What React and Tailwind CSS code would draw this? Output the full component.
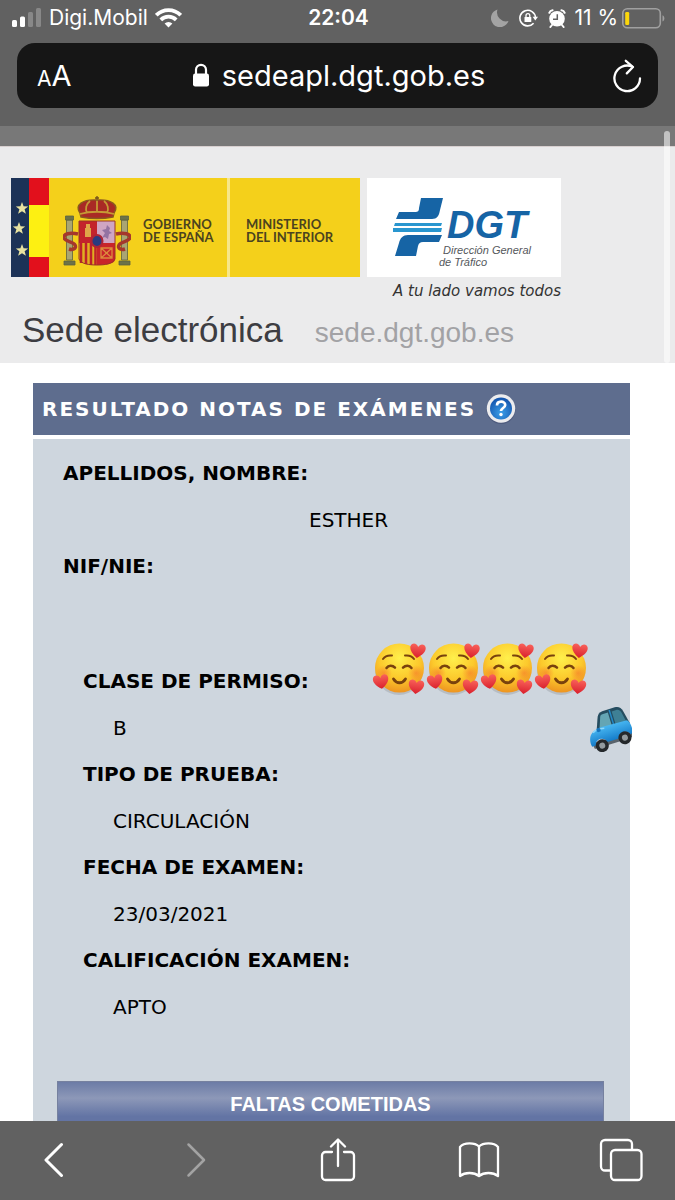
import { useId } from 'react'

const resultados = [
    { label: 'CLASE DE PERMISO:', value: 'B' },
    { label: 'TIPO DE PRUEBA:', value: 'CIRCULACIÓN' },
    { label: 'FECHA DE EXAMEN:', value: '23/03/2021' },
    { label: 'CALIFICACIÓN EXAMEN:', value: 'APTO' },
]

function Signal() {
    return (
        <svg width="30" height="20" viewBox="0 0 30 20" fill="#fff">
            <rect x="0" y="12" width="5" height="7" rx="1.5" />
            <rect x="8" y="8.500" width="5" height="10.500" rx="1.500" />
            <rect x="16" y="4" width="5" height="15" rx="1.500" opacity=".25" />
            <rect x="24" y="0" width="5" height="19" rx="1.500" opacity=".25" />
        </svg>
    )
}

function Wifi() {
    return (
        <svg width="27" height="20" viewBox="0 0 27 20" fill="none" stroke="#fff" strokeWidth="3.800">
            <path d="M1.300 7.200a17.200 17.200 0 0 1 24.400 0" />
            <path d="M5.800 11.800a10.900 10.900 0 0 1 15.400 0" />
            <path d="M13.500 19.600l-3.900-4a5.600 5.600 0 0 1 7.800 0z" fill="#fff" stroke="none" />
        </svg>
    )
}

function Moon() {
    return (
        <svg width="18" height="18" viewBox="0 0 18 18" fill="#a3a3a3">
            <path d="M6.500.500A9 9 0 0 0 17.500 12 9 9 0 1 1 6.500.500z" />
        </svg>
    )
}

function RotationLock() {
    return (
        <svg width="19" height="18" viewBox="0 0 19 18" fill="none" stroke="#fff" strokeWidth="1.600">
            <path d="M14.600 14.200A7.800 7.800 0 1 1 16.500 8.500" />
            <path d="M13.600 7.800h5.400l-2.700 3.800z" fill="#fff" stroke="none" />
            <rect x="5.500" y="8" width="6.800" height="5" rx=".6" fill="#fff" stroke="none" />
            <path d="M7 8.200V6.600a1.900 1.900 0 0 1 3.800 0v1.600" strokeWidth="1.300" />
        </svg>
    )
}

function Alarm() {
    return (
        <svg width="18" height="19" viewBox="0 0 18 19">
            <circle cx="9" cy="9.800" r="7.800" fill="#fff" />
            <g stroke="#fff" strokeWidth="2" strokeLinecap="round" fill="none">
                <path d="M1.300 3.800C1.800 2.400 3 1.400 4.600 1.200M16.700 3.800C16.200 2.400 15 1.400 13.400 1.200" />
                <path d="M4 16l-1.600 2M14 16l1.600 2" />
            </g>
            <path d="M9.300 5.200v5H5" fill="none" stroke="#616161" strokeWidth="1.500" />
        </svg>
    )
}

function Battery() {
    return (
        <svg width="43" height="21" viewBox="0 0 43 21">
            <rect x=".8" y=".8" width="37.500" height="19" rx="4.500" fill="none" stroke="#a0a0a0" strokeWidth="1.600" />
            <rect x="3.200" y="4" width="4" height="13" rx="1.300" fill="#fbd60b" />
            <path d="M40.500 7.200c2.500 1 2.500 5.200 0 6.200z" fill="#a0a0a0" />
        </svg>
    )
}

function Padlock() {
    return (
        <svg width="18" height="25" viewBox="0 0 18 25">
            <rect x="1" y="10.500" width="16" height="13" rx="2.200" fill="#fff" />
            <path d="M4 11V6.800a5 5 0 0 1 10 0V11" fill="none" stroke="#fff" strokeWidth="2.200" />
        </svg>
    )
}

function Reload() {
    return (
        <svg width="30" height="34" viewBox="0 0 30 34" fill="none" stroke="#fff" strokeWidth="2.300" strokeLinecap="round" strokeLinejoin="round">
            <path d="M28 19.500A12.800 12.800 0 1 1 20.500 7.700" />
            <path d="M13.800 1.800L21 8l-6.200 6.400" />
        </svg>
    )
}

function EuropeSpainFlag() {
    return (
        <svg className="shrink-0" width="38" height="99" viewBox="0 0 38 99">
            <rect width="18" height="99" fill="#1c3257" />
            <rect x="18" width="20" height="27" fill="#e2101c" />
            <rect x="18" y="27" width="20" height="52" fill="#fdf012" />
            <rect x="18" y="79" width="20" height="20" fill="#e2101c" />
            <g fill="#e8e2a0">
                <path id="star" d="M11 24l1.600 4.300 4.600.2-3.600 2.800 1.300 4.500-3.900-2.600-3.900 2.600 1.300-4.500-3.600-2.800 4.600-.2z" />
                <use href="#star" x="-3" y="20" />
                <use href="#star" y="42" />
            </g>
        </svg>
    )
}

function CoatOfArms() {
    return (
        <svg className="shrink-0" width="68" height="70" viewBox="0 0 68 70">
            {/* pillars */}
            <g fill="#a9a573" stroke="#5d6240" strokeWidth=".8">
                <path d="M3.500 24h6v40h-6zM58.500 24h6v40h-6z" />
                <path d="M2.500 20h8v4h-8zM57.500 20h8v4h-8zM1 65h11v4H1zM56 65h11v4H56z" fill="#6d7348" />
            </g>
            <g fill="none" stroke="#a5372c" strokeWidth="3.500">
                <path d="M15 38C7 36 0 38 1 42s9 3 11 7-3 5-6 4" />
                <path d="M53 38c8-2 15 0 14 4s-9 3-11 7 3 5 6 4" />
            </g>
            {/* crown */}
            <path d="M17 17c-6-8 3-14 17-13 14-1 23 5 17 13l-1 4c-10 2-22 2-32 0z" fill="#a92a25" stroke="#8a5a1f" strokeWidth="1.500" />
            <path d="M17 18c10-3 24-3 34 0M34 3v13M27 5c-4 3-5 8-3 12M41 5c4 3 5 8 3 12" fill="none" stroke="#c59a35" strokeWidth="1.800" />
            <path d="M34 0v5M32 2h4" stroke="#76511c" strokeWidth="1.300" />
            {/* shield */}
            <path d="M16 25h18v22H16z" fill="#c3232c" />
            <path d="M34 25h18v22H34z" fill="#cfa5c4" />
            <path d="M16 47h18v22c-9 0-17-1-18-5z" fill="#e0ae21" />
            <path d="M18 47v20M23 47v21M28 47v22M32.500 47v22" stroke="#bd222a" strokeWidth="2.500" />
            <path d="M34 47h18v17c-1 4-9 5-18 5z" fill="#c8252a" />
            <path d="M22 41v-9h1v-4h4v4h1v9z" fill="#dfa548" />
            <path d="M39 42l3-5-3-3 4-1 1-4 3 3-1 3 3 2-3 1-1 5-3-2z" fill="#9473a2" />
            <path d="M38 52h11v10H38zM38 52l11 10M49 52L38 62" fill="none" stroke="#dc8b3d" strokeWidth="1.300" />
            <path d="M16 25h36v38c-2 5-10 6-18 6s-16-1-18-6z" fill="none" stroke="#9a3528" />
            <ellipse cx="34" cy="45" rx="5.500" ry="6" fill="#293b80" stroke="#ae2536" strokeWidth="2" />
        </svg>
    )
}

function DgtSymbol() {
    return (
        <svg className="shrink-0" width="52" height="58" viewBox="0 0 52 58" fill="#1664a5">
            <path d="M28 0h22l-3 12c-1 6-3 9-8 9H3l3-7h16c3 0 4-1 4-4z" />
            <path d="M2 25h47l-1 3H1zM0 30h49l-1 4H0z" fill="#2996cf" />
            <path d="M15 37h34l-3 7H30c-3 0-4 1-5 4l-2 10H2l4-13c1-5 4-8 9-8z" />
        </svg>
    )
}

function HelpIcon() {
    return (
        <svg width="30" height="30" viewBox="0 0 30 30">
            <defs>
                <radialGradient id="help" cx="50%" cy="70%" r="65%">
                    <stop offset="0" stopColor="#3b9fe8" />
                    <stop offset="1" stopColor="#1557b0" />
                </radialGradient>
            </defs>
            <circle cx="15" cy="15.500" r="14.500" fill="#3f4c70" opacity=".5" />
            <circle cx="15" cy="14.500" r="14.200" fill="#ececee" />
            <circle cx="15" cy="14.500" r="11" fill="url(#help)" />
            <path d="M11 11.500c0-5 8.200-5 8.200-.5 0 3-4.200 3-4.200 6" fill="none" stroke="#fff" strokeWidth="2.700" />
            <circle cx="15" cy="20.500" r="1.700" fill="#fff" />
        </svg>
    )
}

function HeartsFace() {
    const id = useId()
    const heart = 'M0 14C-6 10-8.500 6-7.500 2.500-6.500-1-1.500-1 0 3 1.500-1 6.500-1 7.500 2.500 8.500 6 6 10 0 14z'
    return (
        <svg width="54" height="54" viewBox="0 0 54 54">
            <defs>
                <radialGradient id={id + 'f'} cx="50%" cy="30%" r="70%">
                    <stop offset="0" stopColor="#fff04c" />
                    <stop offset=".6" stopColor="#fcc92c" />
                    <stop offset="1" stopColor="#ee9420" />
                </radialGradient>
                <radialGradient id={id + 'c'}>
                    <stop offset="0" stopColor="#f4662d" stopOpacity=".5" />
                    <stop offset="1" stopColor="#f4662d" stopOpacity="0" />
                </radialGradient>
                <linearGradient id={id + 'h'} x1="0" y1="0" x2="0" y2="1">
                    <stop offset="0" stopColor="#f9625a" />
                    <stop offset="1" stopColor="#d9202d" />
                </linearGradient>
            </defs>
            <ellipse cx="27" cy="28" rx="24" ry="25" fill="#8c8f91" opacity=".35" />
            <circle cx="27.500" cy="26" r="24.500" fill={`url(#${id}f)`} />
            <circle cx="12" cy="31" r="8" fill={`url(#${id}c)`} />
            <circle cx="44" cy="31" r="8" fill={`url(#${id}c)`} />
            <g fill="none" stroke="#79420d" strokeWidth="2" strokeLinecap="round">
                <path d="M11 17c2-3 5-4 9-3.500M33 13.500c4-.5 7 .5 9 3.500" />
                <path d="M14.500 26c2-3 6-3 8.500-.3M31 25.700c2.500-2.700 6.500-2.700 8.500.3" strokeWidth="2.500" />
                <path d="M21.500 37c3 5 9 5 12 0" strokeWidth="2.800" />
            </g>
            <g fill={`url(#${id}h)`}>
                <path d={heart} transform="translate(46.500 2) rotate(7)" />
                <path d={heart} transform="translate(8 33) rotate(-8)" />
                <path d={heart} transform="translate(45 38) rotate(7)" />
            </g>
        </svg>
    )
}

function Car() {
    return (
        <svg width="46" height="46" viewBox="0 0 46 46">
            <defs>
                <linearGradient id="body" x1="0" y1="0" x2="0" y2="1">
                    <stop offset="0" stopColor="#48b7f2" />
                    <stop offset="1" stopColor="#157cc9" />
                </linearGradient>
            </defs>
            <g transform="rotate(-17 23 24)">
                <path d="M4 38h36c4 0 5-3 4-6H3z" fill="#5a646c" />
                <path d="M11 21l5-13c1-2 3-4 6-4h13c4 0 6 2 7 6l3 14z" fill="#254d60" />
                <path d="M14 21l4-11c1-3 2-3 4-3h5v14z" fill="#64a5b4" />
                <path d="M31 7h4c3 0 4 1 5 4l2 10H31z" fill="#3e8095" />
                <path d="M29 5v17" stroke="#2288c5" strokeWidth="1.500" />
                <path d="M2 35c-1-5 0-10 4-13 3-2 7-3 11-3l26 1c3 3 3 9 2 14h-3c-1-5-11-5-12 1H18c-1-6-11-7-12 0z" fill="url(#body)" />
                <path d="M7 22c3-2 8-2 12-1" stroke="#8fd9fb" strokeWidth="1.500" fill="none" />
                <circle cx="12" cy="37" r="6.500" fill="#24282b" />
                <circle cx="12" cy="37" r="3" fill="#929a9e" />
                <circle cx="36" cy="36" r="6.500" fill="#24282b" />
                <circle cx="36" cy="36" r="3" fill="#929a9e" />
                <rect x="11" y="19" width="4" height="4" rx="1.500" fill="#1573bd" />
            </g>
        </svg>
    )
}

function StatusBar() {
    return (
        <div className="flex items-center h-9 pl-3 pr-2.5 text-[21px] leading-6">
            <div className="flex flex-1 items-center gap-[7px]">
                <Signal />
                <span>Digi.Mobil</span>
                <Wifi />
            </div>
            <span className="font-semibold">22:04</span>
            <div className="flex flex-1 items-center justify-end">
                <Moon />
                <span className="ml-2.5"><RotationLock /></span>
                <span className="ml-2.5"><Alarm /></span>
                <span className="ml-2 mr-1">11 %</span>
                <Battery />
            </div>
        </div>
    )
}

function AddressBar() {
    return (
        <div className="flex items-center justify-between h-[65px] mx-[17px] mt-[7px] mb-[18px] pl-5 pr-4 rounded-[18px] bg-[#161616]">
            <button className="flex items-baseline w-9 pt-1" aria-label="Ajustes de texto">
                <span className="text-[21px] leading-8">A</span>
                <span className="text-[29px] leading-8">A</span>
            </button>
            <div className="flex items-center gap-3 pr-2">
                <Padlock />
                <span className="text-[29px] leading-8">sedeapl.dgt.gob.es</span>
            </div>
            <button aria-label="Recargar"><Reload /></button>
        </div>
    )
}

function Banner() {
    return (
        <div className="bg-[#ebebec] border-t border-[#d8d0d0] pt-[31px] pb-2 font-['Liberation_Sans',Arial,sans-serif]">
            <div className="flex items-start ml-[11px]">
                <div className="flex h-[99px] bg-[#f4d01b] text-[#4b431f] text-[13px] leading-[13px] font-bold font-['Lato',sans-serif]">
                    <EuropeSpainFlag />
                    <div className="flex items-center w-[181px] pl-[14px] pt-1.5 gap-3 border-r-3 border-[#f7e78a]">
                        <CoatOfArms />
                        <span>GOBIERNO<br />DE ESPAÑA</span>
                    </div>
                    <div className="flex items-center w-[130px] pl-4 pt-1.5">
                        <span>MINISTERIO<br />DEL INTERIOR</span>
                    </div>
                </div>
                <div className="ml-[7px]">
                    <div className="flex items-start w-[194px] h-[99px] pl-[26px] pt-5 bg-white">
                        <DgtSymbol />
                        <div className="pt-2">
                            <div className="pl-0.5 text-[#1664a5] text-[38px] leading-[38px] font-bold italic">DGT</div>
                            <div className="-ml-1.5 text-[#55585c] text-[11px] leading-3 italic whitespace-nowrap">
                                <div className="pl-1">Dirección General</div>
                                <div>de Tráfico</div>
                            </div>
                        </div>
                    </div>
                    <div className="pl-[26px] pt-1 text-[#333] text-[15px] leading-5 italic whitespace-nowrap font-['DejaVu_Sans',sans-serif]">A tu lado vamos todos</div>
                </div>
            </div>
            <div className="flex items-baseline gap-8 ml-[22px] mt-1 h-[50px] leading-[50px]">
                <span className="text-[#3d3d42] text-[35px]">Sede electrónica</span>
                <span className="text-[#a2a2a5] text-[28px]">sede.dgt.gob.es</span>
            </div>
        </div>
    )
}

function Campo({ label, value, indent }) {
    return (
        <>
            <dt className="h-6 mb-[23px] font-bold">{label}</dt>
            <dd className={'h-6 mb-[22px] ' + (indent || 'pl-[30px]')}>{value}</dd>
        </>
    )
}

function Toolbar() {
    const boton = 'flex items-center justify-center w-11 h-12'
    return (
        <nav className="flex shrink-0 justify-between px-8 pt-[15px] h-[79px] bg-[#616161]">
            <button className={boton} aria-label="Atrás">
                <svg width="20" height="36" viewBox="0 0 20 36" fill="none" stroke="#fff" strokeWidth="3" strokeLinecap="round" strokeLinejoin="round">
                    <path d="M17.500 2.500L2 18l15.500 15.500" />
                </svg>
            </button>
            <button className={boton} aria-label="Adelante">
                <svg width="20" height="36" viewBox="0 0 20 36" fill="none" stroke="#a3a3a3" strokeWidth="2.500" strokeLinecap="round" strokeLinejoin="round">
                    <path d="M2.500 2.500L18 18 2.500 33.500" />
                </svg>
            </button>
            <button className={boton} aria-label="Compartir">
                <svg width="36" height="44" viewBox="0 0 36 44" fill="none" stroke="#fff" strokeWidth="2.300" strokeLinecap="round" strokeLinejoin="round">
                    <path d="M12 14H5.500A3.500 3.500 0 0 0 2 17.500v21A3.500 3.500 0 0 0 5.500 42h25a3.500 3.500 0 0 0 3.500-3.500v-21a3.500 3.500 0 0 0-3.500-3.500H24" />
                    <path d="M18 28V2M11 8.500L18 1.500l7 7" />
                </svg>
            </button>
            <button className={boton} aria-label="Marcadores">
                <svg width="42" height="38" viewBox="0 0 42 38" fill="none" stroke="#fff" strokeWidth="2.300" strokeLinejoin="round">
                    <path d="M21 5.500C17 1.500 6 1 2 6v29c5-4 14-4 19 0 5-4 14-4 19 0V6C36 1 25 1.500 21 5.500zM21 5.500V35" />
                </svg>
            </button>
            <button className={boton} aria-label="Pestañas">
                <svg width="44" height="44" viewBox="0 0 44 44" fill="none" stroke="#fff" strokeWidth="2.300">
                    <path d="M12 32.500H6A4 4 0 0 1 2 28.500V6a4 4 0 0 1 4-4h23a4 4 0 0 1 4 4v6" />
                    <rect x="12" y="12" width="30.500" height="30" rx="4" />
                </svg>
            </button>
        </nav>
    )
}

export default function App() {
    return (
        <div className="flex flex-col h-screen overflow-hidden bg-white font-['Inter',sans-serif]">
            <header className="shrink-0 bg-[#616161] text-white">
                <StatusBar />
                <AddressBar />
            </header>
            <main className="relative flex-1 min-h-0 overflow-hidden">
                <div className="h-5 bg-[#787878]"></div>
                <Banner />
                <div className="absolute right-[5px] top-[5px] w-[6px] h-[232px] rounded-full bg-white/55"></div>

                <div className="mt-5 ml-[33px] mr-[45px] text-black text-xl leading-6 font-['DejaVu_Sans',Verdana,sans-serif]">
                    <div className="flex items-center gap-2.5 h-[52px] pl-[9px] bg-[#5e6d8e] text-white">
                        <h1 className="font-bold tracking-widest">RESULTADO NOTAS DE EXÁMENES</h1>
                        <button aria-label="Ayuda"><HelpIcon /></button>
                    </div>
                    <div className="relative mt-1 pt-[22px] bg-[#ced6de]">
                        <dl className="pl-[30px]">
                            <Campo label="APELLIDOS, NOMBRE:" value="ESTHER" indent="pl-[246px]" />
                            <Campo label="NIF/NIE:" value="" />
                        </dl>
                        <dl className="pl-[50px] pt-[22px]">
                            {resultados.map((r) => (
                                <Campo key={r.label} label={r.label} value={r.value} />
                            ))}
                        </dl>
                        <div className="absolute flex right-[42px] top-[203px]">
                            <HeartsFace />
                            <HeartsFace />
                            <HeartsFace />
                            <HeartsFace />
                        </div>
                        <div className="absolute -right-0.5 top-[267px]">
                            <Car />
                        </div>
                        <div className="pl-6 pr-[26px] pt-10 pb-8">
                            <h2 className="h-12 border border-[#76819f] bg-linear-to-b from-[#6c7ca6] via-[#8d98b8] via-35% to-[#6374a4] to-75% text-center text-white font-bold leading-[44px] font-['Liberation_Sans',Arial,sans-serif]">FALTAS COMETIDAS</h2>
                        </div>
                    </div>
                </div>
            </main>
            <Toolbar />
        </div>
    )
}
